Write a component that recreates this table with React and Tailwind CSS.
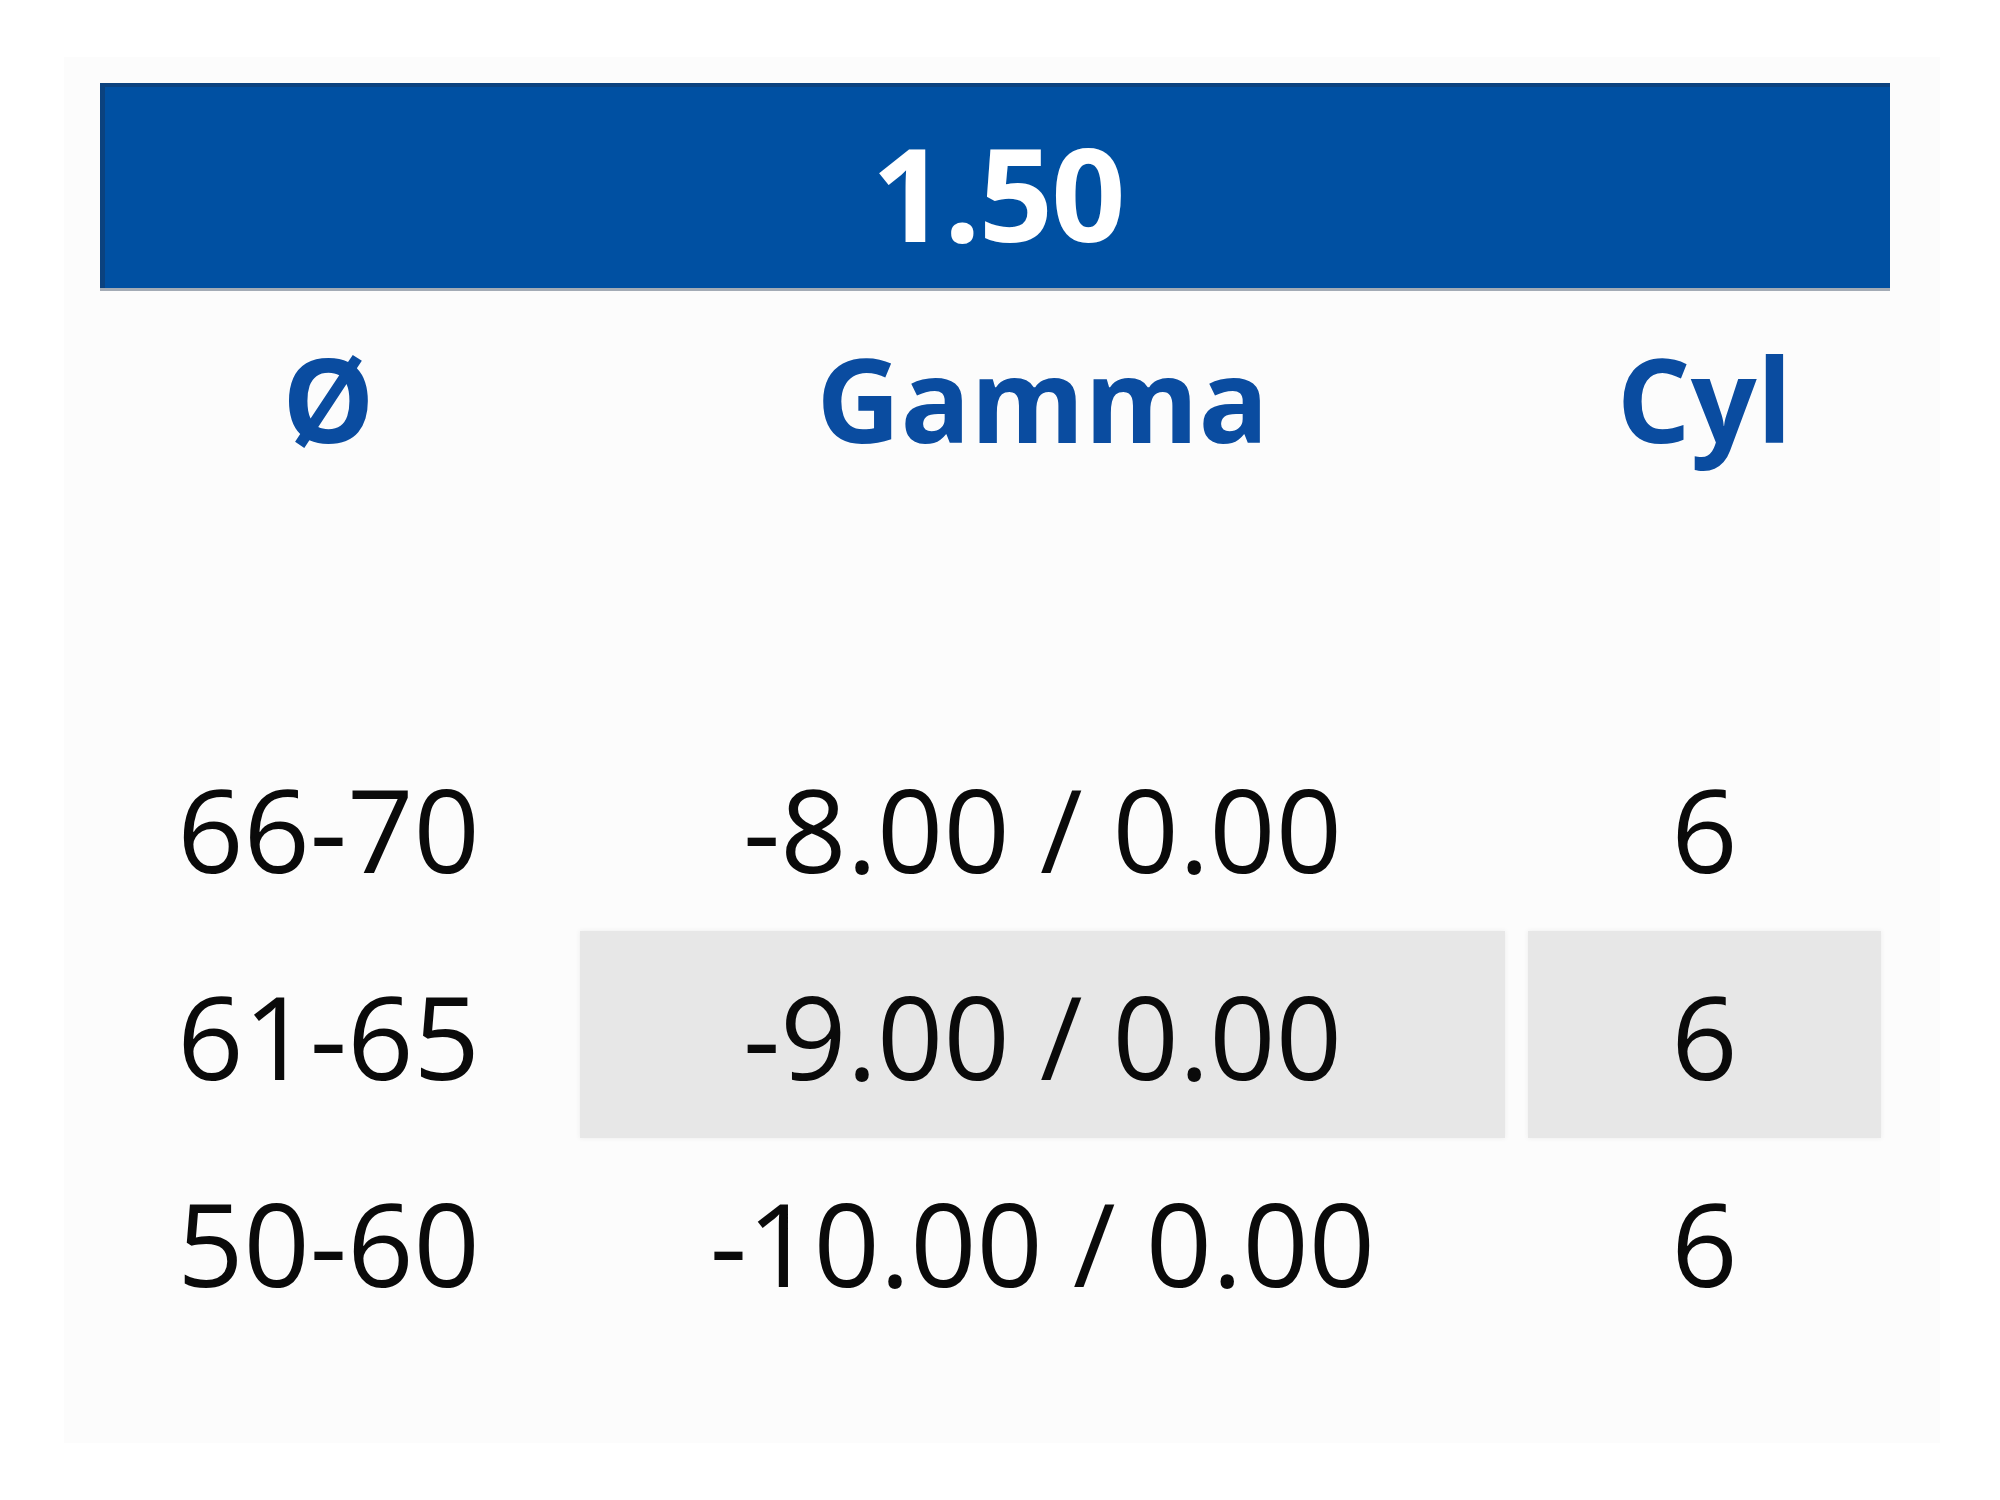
import React from "react";

const rows = [
  { dia: "66-70", gamma: "-8.00 / 0.00", cyl: "6", hl: false },
  { dia: "61-65", gamma: "-9.00 / 0.00", cyl: "6", hl: true },
  { dia: "50-60", gamma: "-10.00 / 0.00", cyl: "6", hl: false },
];

function App() {
  return (
    <div className="min-h-screen w-full bg-white font-['Open_Sans','Noto_Sans',sans-serif] pt-[57px] pl-[64px]">
      <div className="w-[1876px] h-[1386px] bg-[#fcfcfc] pt-[26px] pl-[36px]">
        {/* index header */}
        <div className="w-[1790px] h-[205px] bg-[#0050a2] border-t-[4px] border-l-[5px] border-[#0b427f] shadow-[0_3px_0_#a3abb5] flex items-center justify-center pt-[8px]">
          <span className="text-[130px] leading-none font-bold text-white tracking-[-2px]">1.50</span>
        </div>

        {/* column titles */}
        <div className="grid grid-cols-[457px_925px_353px] gap-x-[23px] mt-[52px] text-[#0a4ca0] font-bold text-[116px] leading-none text-center">
          <div>Ø</div>
          <div>Gamma</div>
          <div>Cyl</div>
        </div>

        {/* values */}
        <div className="mt-[268px] flex flex-col text-[116px] leading-none text-[#0a0a0a] text-center">
          {rows.map((r) => (
            <div key={r.dia} className="grid grid-cols-[457px_925px_353px] gap-x-[23px] h-[207px]">
              <div className="flex items-center justify-center">{r.dia}</div>
              <div className={"flex items-center justify-center " + (r.hl ? "bg-[#e7e7e7] shadow-[0_0_5px_#ececec]" : "")}>
                {r.gamma}
              </div>
              <div className={"flex items-center justify-center " + (r.hl ? "bg-[#e7e7e7] shadow-[0_0_5px_#ececec]" : "")}>
                {r.cyl}
              </div>
            </div>
          ))}
        </div>
      </div>
    </div>
  );
}

export default App;
